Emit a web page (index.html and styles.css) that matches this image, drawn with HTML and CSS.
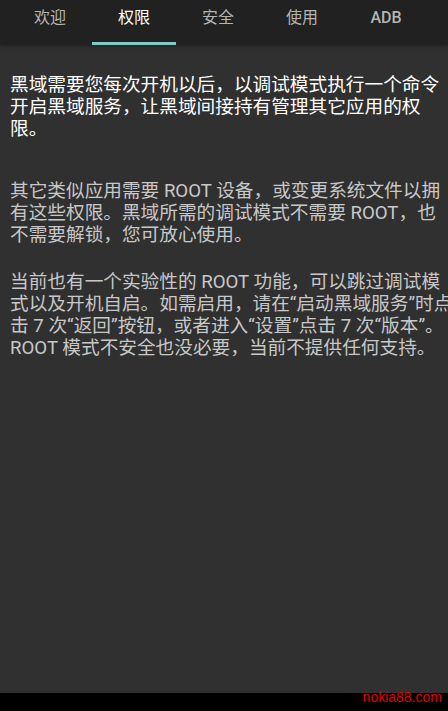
FILE: index.html
```html
<!DOCTYPE html>
<html lang="zh-CN">
<head>
  <meta charset="UTF-8">
  <meta name="viewport" content="width=device-width, initial-scale=1.0">
  <title>黑域 - 权限</title>
  <link rel="stylesheet" href="styles.css">
</head>
<body>
  <div class="screen">
    <!-- タブバー -->
    <nav class="tabs">
      <div class="tab">欢迎</div>
      <div class="tab active">权限</div>
      <div class="tab">安全</div>
      <div class="tab">使用</div>
      <div class="tab latin">ADB</div>
    </nav>
    <!-- 本文 -->
    <main class="content">
      <p class="lead">黑域需要您每次开机以后，以调试模式执行一个命令<br>开启黑域服务，让黑域间接持有管理其它应用的权<br>限。</p>
      <p class="note">其它类似应用需要 ROOT 设备，或变更系统文件以拥<br>有这些权限。黑域所需的调试模式不需要 ROOT，也<br>不需要解锁，您可放心使用。</p>
      <p class="note second">当前也有一个实验性的 ROOT 功能，可以跳过调试模<br>式以及开机自启。如需启用，请在“启动黑域服务”时点<br>击 7 次“返回”按钮，或者进入“设置”点击 7 次“版本”。<br>ROOT 模式不安全也没必要，当前不提供任何支持。</p>
    </main>
    <div class="navbar"></div>
    <span class="watermark">nokia88.com</span>
  </div>
</body>
</html>
```
FILE: styles.css
```css
/* --- 全体 --- */
html, body {
  margin: 0;
  padding: 0;
  background-color: #303030;
}
body {
  font-family: Roboto, "Noto Sans CJK SC", sans-serif;
}
.screen {
  position: relative;
  width: 448px;
  height: 711px;
  display: flex;
  flex-direction: column;
  overflow: hidden;
}
/* --- タブバー --- */
.tabs {
  display: flex;
  height: 45px;
  padding-left: 8px;
  background-color: #212121;
  box-shadow: 0 1px 4px rgba(0,0,0,0.35);
  position: relative;
  z-index: 1;
}
.tab {
  width: 84px;
  height: 45px;
  box-sizing: border-box;
  line-height: 36px;
  text-align: center;
  font-size: 16px;
  color: #b4b4b4;
}
.tab.latin {
  font-weight: 500;
}
.tab.active {
  color: #ffffff;
  border-bottom: 3px solid #80cbc4;
}
/* --- 本文 --- */
.content {
  flex: 1;
  padding: 29px 0 0 10px;
}
.content p {
  margin: 0;
  font-size: 18.67px;
  line-height: 22px;
  white-space: nowrap;
}
.lead {
  color: #ffffff;
}
.note {
  color: #c8c8c8;
  margin-top: 40px !important;
}
.note.second {
  margin-top: 25px !important;
}
/* --- ナビゲーションバー --- */
.navbar {
  height: 18px;
  background-color: #000000;
}
.watermark {
  position: absolute;
  right: 6px;
  bottom: 6px;
  font-family: "Liberation Sans", sans-serif;
  font-size: 14px;
  line-height: 16px;
  color: #e00000;
}
```
